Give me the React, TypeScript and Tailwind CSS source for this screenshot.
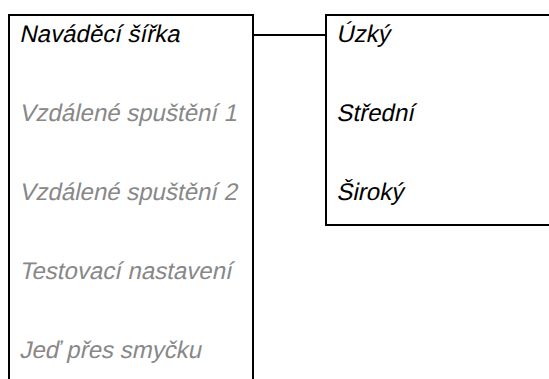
const mainItems = [
  { label: 'Naváděcí šířka', active: true },
  { label: 'Vzdálené spuštění 1', active: false },
  { label: 'Vzdálené spuštění 2', active: false },
  { label: 'Testovací nastavení', active: false },
  { label: 'Jeď přes smyčku', active: false },
];

const widthOptions = ['Úzký', 'Střední', 'Široký'];

function Row({ label, muted }: { label: string; muted?: boolean }) {
  return (
    <div className="h-[79px] shrink-0">
      <div
        className={
          'pl-[8px] text-[24px] leading-[28px] whitespace-nowrap ' +
          (muted ? 'text-[#888888]' : 'text-black')
        }
      >
        <span className="inline-block -skew-x-12 origin-bottom">{label}</span>
      </div>
    </div>
  );
}

export default function App() {
  return (
    <div className="w-[549px] h-[379px] overflow-hidden bg-white font-['Liberation_Sans',Arial,sans-serif]">
      <div className="flex items-start pl-[8px] pt-[14px]">
        {/* Main menu */}
        <div className="w-[246px] h-[420px] shrink-0 border-2 border-black pt-[4px] flex flex-col">
          {mainItems.map((item) => (
            <Row key={item.label} label={item.label} muted={!item.active} />
          ))}
        </div>

        {/* Connector */}
        <div className="w-[71px] h-[2px] mt-[20px] bg-black shrink-0" />

        {/* Submenu */}
        <div className="w-[240px] h-[212px] shrink-0 border-2 border-black pt-[4px] flex flex-col overflow-hidden">
          {widthOptions.map((opt) => (
            <Row key={opt} label={opt} />
          ))}
        </div>
      </div>
    </div>
  );
}
